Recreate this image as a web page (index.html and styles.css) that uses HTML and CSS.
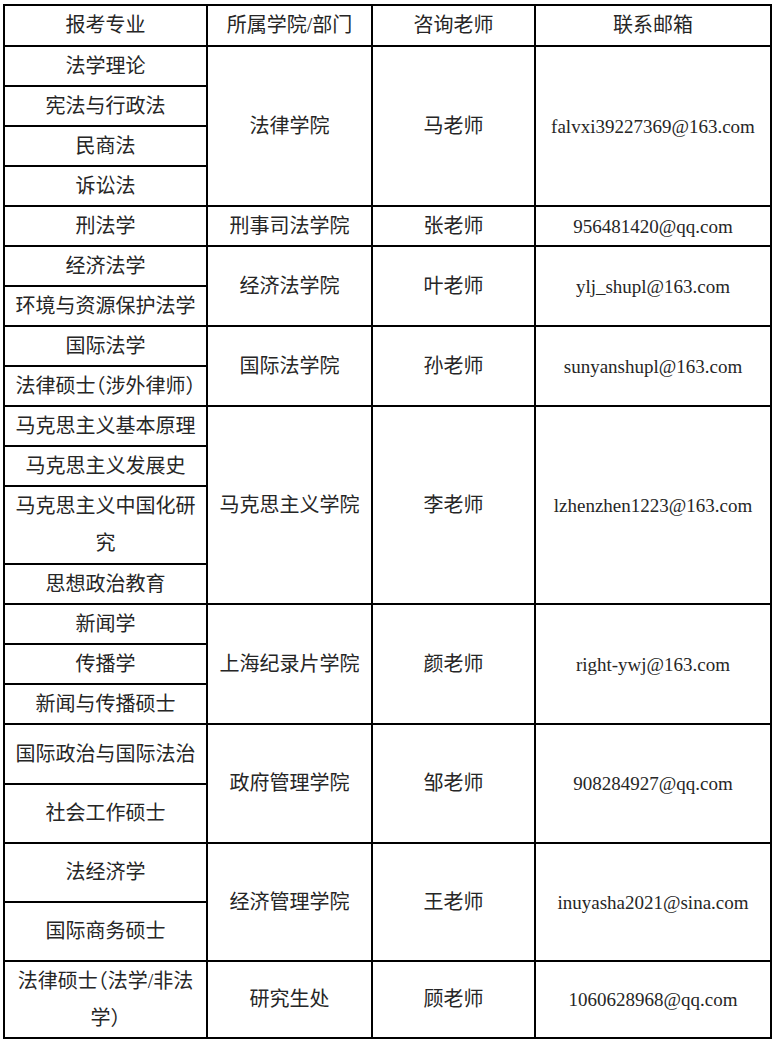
FILE: index.html
```html
<!DOCTYPE html>
<html lang="zh-CN">
<head>
<meta charset="utf-8">
<title>联系表</title>
<link rel="stylesheet" href="styles.css">
</head>
<body>
<table class="grid">
  <colgroup>
    <col class="c1"><col class="c2"><col class="c3"><col class="c4">
  </colgroup>
  <tr class="h41"><td>报考专业</td><td>所属学院/部门</td><td>咨询老师</td><td>联系邮箱</td></tr>
  <tr class="h40"><td>法学理论</td><td rowspan="4">法律学院</td><td rowspan="4">马老师</td><td rowspan="4" class="mail">falvxi39227369@163.com</td></tr>
  <tr class="h40"><td>宪法与行政法</td></tr>
  <tr class="h40"><td>民商法</td></tr>
  <tr class="h40"><td>诉讼法</td></tr>
  <tr class="h40"><td>刑法学</td><td>刑事司法学院</td><td>张老师</td><td class="mail">956481420@qq.com</td></tr>
  <tr class="h40"><td>经济法学</td><td rowspan="2">经济法学院</td><td rowspan="2">叶老师</td><td rowspan="2" class="mail">ylj_shupl@163.com</td></tr>
  <tr class="h40"><td>环境与资源保护法学</td></tr>
  <tr class="h40"><td>国际法学</td><td rowspan="2">国际法学院</td><td rowspan="2">孙老师</td><td rowspan="2" class="mail">sunyanshupl@163.com</td></tr>
  <tr class="h40"><td>法律硕士（涉外律师）</td></tr>
  <tr class="h40"><td>马克思主义基本原理</td><td rowspan="4">马克思主义学院</td><td rowspan="4">李老师</td><td rowspan="4" class="mail">lzhenzhen1223@163.com</td></tr>
  <tr class="h40"><td>马克思主义发展史</td></tr>
  <tr class="h78"><td>马克思主义中国化研究</td></tr>
  <tr class="h40"><td>思想政治教育</td></tr>
  <tr class="h40"><td>新闻学</td><td rowspan="3">上海纪录片学院</td><td rowspan="3">颜老师</td><td rowspan="3" class="mail">right-ywj@163.com</td></tr>
  <tr class="h40"><td>传播学</td></tr>
  <tr class="h40"><td>新闻与传播硕士</td></tr>
  <tr class="h60"><td>国际政治与国际法治</td><td rowspan="2">政府管理学院</td><td rowspan="2">邹老师</td><td rowspan="2" class="mail">908284927@qq.com</td></tr>
  <tr class="h59"><td>社会工作硕士</td></tr>
  <tr class="h59"><td>法经济学</td><td rowspan="2">经济管理学院</td><td rowspan="2">王老师</td><td rowspan="2" class="mail">inuyasha2021@sina.com</td></tr>
  <tr class="h59"><td>国际商务硕士</td></tr>
  <tr class="h77"><td>法律硕士（法学/非法学）</td><td>研究生处</td><td>顾老师</td><td class="mail">1060628968@qq.com</td></tr>
</table>
</body>
</html>
```

FILE: styles.css
```css
html, body {
  margin: 0;
  padding: 0;
  background: #ffffff;
}

body {
  font-family: "Liberation Serif", "Noto Sans CJK SC", serif;
  font-size: 20px;
  color: #262626;
}

.grid {
  border-collapse: collapse;
  table-layout: fixed;
  width: 767px;
  margin: 4px 0 0 3px;
}

.c1 { width: 203px; }
.c2 { width: 165px; }
.c3 { width: 163px; }
.c4 { width: 236px; }

.grid td {
  border: 2px solid #000000;
  padding: 0 4px;
  text-align: center;
  vertical-align: middle;
  line-height: 37px;
  font-feature-settings: "halt";
}

.grid .mail {
  font-size: 19px;
  padding: 0;
}

/* full row heights, collapsed borders included */
.h40 { height: 40px; }
.h41 { height: 41px; }
.h59 { height: 59px; }
.h60 { height: 60px; }
.h77 { height: 77px; }
.h78 { height: 78px; }
```
